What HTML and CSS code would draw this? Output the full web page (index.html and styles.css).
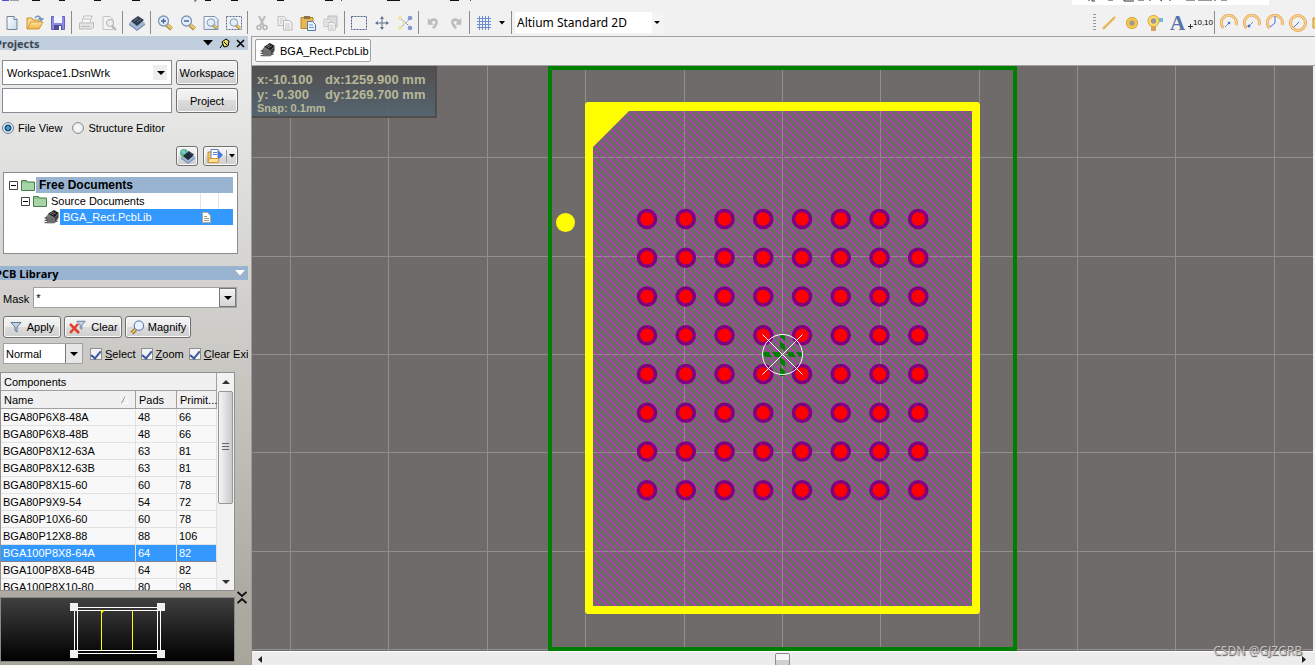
FILE: index.html
```html
<!DOCTYPE html>
<html lang="en">

<head>
    <meta charset="UTF-8">
    <meta name="viewport" content="width=device-width, initial-scale=1.0">
    <title>BGA_Rect.PcbLib</title>
    <link rel="stylesheet" href="styles.css">
</head>

<body>
    <!-- shared icons -->
    <svg class="defs" aria-hidden="true">
        <defs>
            <linearGradient id="paper" x1="0" y1="0" x2="1" y2="1">
                <stop offset="0" stop-color="#fff"/><stop offset="1" stop-color="#c8dcea"/>
            </linearGradient>
            <linearGradient id="gold" x1="0" y1="0" x2="0" y2="1">
                <stop offset="0" stop-color="#ffe9a0"/><stop offset="1" stop-color="#f0b040"/>
            </linearGradient>
            <symbol id="i-lens" viewBox="0 0 16 16">
                <path d="M9.500 9.500l5 4.500" stroke="#9a8040" stroke-width="4"/>
                <path d="M10 9.500l4.500 4" stroke="#f0c860" stroke-width="2.500"/>
                <circle cx="6.500" cy="6" r="5" fill="#e2effa" stroke="#8494b4" stroke-width="1.300"/>
            </symbol>
            <symbol id="i-chip" viewBox="0 0 16 16">
                <path d="M1 8l4-5h7l-2 11H3z" fill="#777"/>
                <path d="M3 8h8v6H3z" fill="#6e6e6e"/>
                <path d="M0 8.500h3M0 11h3M0 13.500h3M12 9.500h2M12 12h2" stroke="#333"/>
                <path d="M4 4l6-4 5 3-4 5z" fill="#1c1c1c"/>
                <path d="M6 4l4-2M8 5l4-2" stroke="#888"/>
                <path d="M11 8l4-5v5l-4 6z" fill="#454545"/>
            </symbol>
            <symbol id="i-board" viewBox="0 0 16 16">
                <path d="M0 8l8 6 8-6v2l-8 6-8-6z" fill="#7b93b8"/>
                <path d="M0 8l8-6 8 6-8 6z" fill="#9fb6d0"/>
                <path d="M2 6l7-5 6 4-7 6z" fill="#303c4c"/>
                <path d="M5 6l4-3M8 7l4-3" stroke="#6d7c90"/>
            </symbol>
            <symbol id="i-folder" viewBox="0 0 14 12">
                <path d="M.5 11.500v-10h5l1 1.500h7v8.500z" fill="#8cc48c" stroke="#4c7c4c"/>
                <path d="M1 4h12v7H1z" fill="#a6d6a6"/>
            </symbol>
            <symbol id="i-funnel" viewBox="0 0 12 12">
                <path d="M1 1.500h10L7 6v5L5 9.500V6z" fill="#c6d4e6" stroke="#5d7492"/>
            </symbol>
            <symbol id="i-copy" viewBox="0 0 16 16">
                <path d="M1 1.500h6l2 2v7H1z" fill="#eee" stroke="#c0c0c0"/>
                <path d="M6.500 5.500h6l2.500 2.500v7H6.500z" fill="#f6f6f6" stroke="#b6b6b6"/>
                <path d="M8 9h5M8 11h5M8 13h5M3 4h3M3 6h2M3 8h2" stroke="#c6c6c6"/>
            </symbol>
            <symbol id="i-undo" viewBox="0 0 16 16">
                <path d="M4 7c3-4 9-4 8 1-.5 2-2 4-4 6" fill="none" stroke="#bcbcbc" stroke-width="3"/>
                <path d="M2 2v8h7z" fill="#bcbcbc"/>
            </symbol>
            <symbol id="i-arc" viewBox="0 0 18 18">
                <path d="M3.500 14A7.500 7.500 0 1 1 16 11" fill="none" stroke="#dca860" stroke-width="3"/>
                <path d="M3.500 14A7.500 7.500 0 1 1 16 11" fill="none" stroke="#ffd08a" stroke-width="1.500"/>
            </symbol>
        </defs>
    </svg>

    <!-- lower edge of the menu row -->
    <div class="menu-edge">
        <svg class="menu-marks" width="480" height="6">
            <path d="M2 0h7v5H2z" fill="#5050e0"/>
            <path d="M10 0h9v5h-9z" fill="#a0a0a0"/>
            <path d="M32 4.500h8M59 4.500h6M94 4.500h7M132 4.500h8M205 4.500h6M231 4.500h7M277 4.500h7M325 4.500h8M387 4.500h13M450 4.500h9" stroke="#111"/>
            <path d="M196 2v3h-2M341.500 0v5M470.500 0v5" fill="none" stroke="#554"/>
        </svg>
        <div class="address-edge">
            <svg width="160" height="6">
                <path d="M4 3h2M8 0v4h3M24 3h5M40 0v4h10M54 3h6M66 2v2M75 2l3 2M86 2v2M102 3h9M114 3h14M131 2v2M137 3h6" fill="none" stroke="#333"/>
            </svg>
        </div>
    </div>

    <div class="toolbar">
        <button class="tool" aria-label="New"><svg width="16" height="16"><path d="M3 1.500h7l3 3v10H3z" fill="url(#paper)" stroke="#6e8498"/><path d="M10 1.500v3h3" fill="#fff" stroke="#6e8498"/></svg></button>
        <button class="tool" aria-label="Open"><svg width="18" height="16"><path d="M1 14V3h5l1 2h6v3" fill="#f8d68a" stroke="#c89030"/><path d="M1 14l4-7h12l-4 7z" fill="url(#gold)" stroke="#d09838"/><path d="M9 3c2-3 5-2 6 1" fill="none" stroke="#7098c0" stroke-width="1.500"/><path d="M12 3h6l-3 4z" fill="#7098c0"/></svg></button>
        <button class="tool" aria-label="Save"><svg width="16" height="16"><path d="M1.500 1.500h13v13h-13z" fill="#8c8cdc" stroke="#6464b8"/><path d="M4 1h8v7H4z" fill="#f2f5ff"/><path d="M4 10h8v5H4z" fill="#4c4c98"/><path d="M9 11h2v4H9z" fill="#fff"/></svg></button>
        <span class="sep"></span>
        <button class="tool" aria-label="Print"><svg width="16" height="16"><path d="M4 7l2-6h8l-2 6" fill="#f8f8f8" stroke="#bbb"/><path d="M1.500 8h12l2-1v5l-2 2h-12z" fill="#e4e4e4" stroke="#bbb"/><path d="M3 11.500h9M6 4h6" stroke="#bbb"/></svg></button>
        <button class="tool" aria-label="Print Preview"><svg width="16" height="16"><path d="M2 1.500h7l3 3v10H2z" fill="#f4f4f4" stroke="#c4c4c4"/><circle cx="9" cy="8" r="3.500" fill="#eee" stroke="#b0b0b0"/><path d="M11 11l4 4" stroke="#b4b4b4" stroke-width="2"/></svg></button>
        <span class="sep"></span>
        <button class="tool" aria-label="Board"><svg width="16" height="16"><use href="#i-board"/></svg></button>
        <span class="sep"></span>
        <button class="tool" aria-label="Zoom In"><svg width="16" height="16"><use href="#i-lens"/><path d="M4 6h5M6.500 3.500v5" stroke="#4464a0" stroke-width="1.500"/></svg></button>
        <button class="tool" aria-label="Zoom Out"><svg width="16" height="16"><use href="#i-lens"/><path d="M4 6h5" stroke="#4464a0" stroke-width="1.500"/></svg></button>
        <button class="tool" aria-label="Fit Document"><svg width="16" height="16"><path d="M1 1.500h11l3 3v10H1z" fill="url(#paper)" stroke="#7c94b0"/><use href="#i-lens" x="3" y="3" width="12" height="12"/></svg></button>
        <button class="tool" aria-label="Zoom Area"><svg width="16" height="16"><path d="M.5 1.500h15v13H.5z" fill="none" stroke="#5a6c94" stroke-dasharray="2 1"/><use href="#i-lens" x="3" y="3" width="12" height="12"/></svg></button>
        <span class="sep"></span>
        <button class="tool" aria-label="Cut"><svg width="16" height="16"><path d="M5 1l5 10M11 1L6 11" stroke="#bcbcbc" stroke-width="2"/><circle cx="5" cy="12.500" r="2" fill="none" stroke="#b4b4b4" stroke-width="1.500"/><circle cx="11" cy="12.500" r="2" fill="none" stroke="#b4b4b4" stroke-width="1.500"/></svg></button>
        <button class="tool" aria-label="Copy"><svg width="16" height="16"><use href="#i-copy"/></svg></button>
        <button class="tool" aria-label="Paste"><svg width="16" height="16"><path d="M1 2.500h12v11H1z" fill="#e8b850" stroke="#b88828"/><path d="M4 1h6v3H4z" fill="#8a7448"/><path d="M7.500 6.500h5l3 3v6h-8z" fill="#e8f2ff" stroke="#5878a8"/><path d="M9 10h4M9 12.500h5" stroke="#7d9cc8"/></svg></button>
        <button class="tool" aria-label="Paste Special"><svg width="16" height="16"><path d="M5 1h9v11H5z" fill="#ddd" stroke="#bcbcbc"/><use href="#i-copy" y="3" width="13" height="13"/></svg></button>
        <span class="sep"></span>
        <button class="tool" aria-label="Select Inside"><svg width="16" height="16"><path d="M.5 1.500h15v13H.5z" fill="none" stroke="#4c5c84" stroke-dasharray="2 1"/></svg></button>
        <button class="tool" aria-label="Move"><svg width="14" height="14" viewBox="1 1 14 14"><path d="M2 8h12M8 2v12" stroke="#62748e"/><path d="M8 1L6 4h4zM8 15l-2-3h4zM1 8l3-2v4zM15 8l-3-2v4z" fill="#62748e"/></svg></button>
        <button class="tool" aria-label="Deselect"><svg width="16" height="16"><path d="M4 4l5 4-5 4M14 2l-5 6 5 5" fill="none" stroke="#7a8cb0" stroke-dasharray="2 1"/><circle cx="3" cy="3" r="2" fill="#f0e6a0"/><circle cx="3" cy="13" r="2" fill="#f0e6a0"/><circle cx="13" cy="3" r="2.300" fill="#7f9acc"/><circle cx="13" cy="13" r="2.300" fill="#7f9acc"/><circle cx="7" cy="8" r="1.500" fill="#f0e6a0"/></svg></button>
        <span class="sep"></span>
        <button class="tool" aria-label="Undo"><svg width="14" height="14"><use href="#i-undo"/></svg></button>
        <button class="tool" aria-label="Redo"><svg width="14" height="14"><use href="#i-undo" transform="translate(14 0) scale(-1 1)"/></svg></button>
        <span class="sep"></span>
        <button class="tool" aria-label="Grid"><svg width="16" height="16"><path d="M1 3.500h14M1 6.500h14M1 9.500h14M1 12.500h14M3.500 1v14M6.500 1v14M9.500 1v14M12.500 1v14" stroke="#6a8fcc"/></svg></button>
        <button class="tool tool-caret" aria-label="Grid options"><svg width="6" height="4"><path d="M0 0h6L3 3.500z"/></svg></button>
        <span class="sep"></span>
        <div class="pick view-pick">
            <select aria-label="View configuration"><option>Altium Standard 2D</option></select>
        </div>

        <div class="tools-right">
            <span class="grip"></span>
            <button class="tool" aria-label="Place Line"><svg width="16" height="16"><path d="M2 14L14 2" stroke="#dca030" stroke-width="2"/><path d="M2 14L14 2" stroke="#ffd468" stroke-width=".8"/></svg></button>
            <button class="tool" aria-label="Place Pad"><svg width="16" height="16"><circle cx="8" cy="8" r="4" fill="#aaa" stroke="#c08c28" stroke-width="4"/><circle cx="8" cy="8" r="4" fill="#999" stroke="#f4c44c" stroke-width="3"/></svg></button>
            <button class="tool" aria-label="Place Via"><svg width="16" height="16"><path d="M4 8h5v8H4z" fill="#dda060"/><path d="M9 3h7v4H9z" fill="#6cbcd8"/><circle cx="6.500" cy="6" r="4" fill="#aaa" stroke="#d09c30" stroke-width="4"/><circle cx="6.500" cy="6" r="4" fill="#999" stroke="#ffda68" stroke-width="2.500"/></svg></button>
            <button class="tool tool-text" aria-label="Place String">A</button>
            <button class="tool tool-coord" aria-label="Place Coordinate"><svg width="5" height="5"><path d="M0 2.500h5M2.500 0v5" stroke="#333"/></svg><span>10,10</span></button>
            <span class="sep"></span>
            <button class="tool" aria-label="Arc Center"><svg width="18" height="18"><use href="#i-arc"/><path d="M5 13l4-4" stroke="#6b90cc"/><circle cx="9" cy="9" r="1.300" fill="#4874c4"/></svg></button>
            <button class="tool" aria-label="Arc Edge"><svg width="18" height="18"><use href="#i-arc"/><path d="M5 13l5-5" stroke="#6b90cc"/><circle cx="6" cy="12" r="1.500" fill="#4874c4"/></svg></button>
            <button class="tool" aria-label="Arc Any Angle"><svg width="18" height="18"><use href="#i-arc"/><path d="M4 13l5-4V2" fill="none" stroke="#4874c4"/></svg></button>
            <button class="tool" aria-label="Full Circle"><svg width="18" height="18"><circle cx="9" cy="9" r="7.500" fill="none" stroke="#dca860" stroke-width="3"/><circle cx="9" cy="9" r="7.500" fill="none" stroke="#ffd08a" stroke-width="1.500"/><path d="M5 13l5-5" stroke="#4874c4"/></svg></button>
            <button class="tool tool-cut" aria-label="Place Fill"><svg width="16" height="12"><path d="M4 1h12v10H4z" fill="#ffd058" stroke="#cc9030"/></svg></button>
        </div>
    </div>

    <div class="main">
        <div class="sidebar">
            <div class="panel-title">
                <span class="panel-name">Projects</span>
                <button class="plain" aria-label="Panel menu"><svg width="10" height="6"><path d="M0 0h10L5 5.500z"/></svg></button>
                <button class="plain" aria-label="Pin"><svg width="11" height="11"><path d="M1 10l3-4" stroke="#000"/><path d="M3 4l4-3 3 2-1 5-4 1z" fill="#e8e060" stroke="#000"/><path d="M5 4l3 3" stroke="#000"/></svg></button>
                <button class="plain" aria-label="Close"><svg width="9" height="9"><path d="M1 1l7 7M8 1L1 8" stroke="#000" stroke-width="1.600"/></svg></button>
            </div>

            <div class="projects">
                <div class="field-row">
                    <div class="pick workspace-pick">
                        <select aria-label="Workspace file"><option>Workspace1.DsnWrk</option></select>
                    </div>
                    <button class="btn btn-wide">Workspace</button>
                </div>
                <div class="field-row">
                    <input class="text-box" type="text" aria-label="Project name">
                    <button class="btn btn-wide">Project</button>
                </div>
                <div class="radio-row">
                    <label><input type="radio" name="view" checked>File View</label>
                    <label><input type="radio" name="view">Structure Editor</label>
                </div>
                <div class="icon-row">
                    <button class="btn btn-icon" aria-label="Project options"><svg width="16" height="16"><use href="#i-board" x="2" y="2" width="14" height="14"/><circle cx="5" cy="5" r="4" fill="#5cb87c"/><path d="M2 3l3-1 2 3-3 1z" fill="#7cc4f0"/><path d="M4 8l5-4 5 4-5 4z" fill="#202c3c"/></svg></button>
                    <button class="btn btn-split" aria-label="Open project">
                        <svg width="16" height="16"><path d="M1 14V4h4l1 2h5v8z" fill="#f8cc60" stroke="#c89030"/><path d="M4 1.500h7v9H4z" fill="#fff" stroke="#5a80c8"/><path d="M6 4.500h4M6 6.500h4" stroke="#5a80c8"/><path d="M11 2l5 5-5 5z" fill="#4878e0"/><path d="M1 14.500l1-4h10l-1 4z" fill="#ffe090" stroke="#d09838"/></svg>
                        <svg width="9" height="12"><path d="M.5 0v12" stroke="#999"/><path d="M3 4h6L6 7.500z"/></svg>
                    </button>
                </div>
                <div class="tree">
                    <div class="node node-root">
                        <svg width="9" height="9"><path d="M.5.5h8v8h-8z" fill="#fff" stroke="#444"/><path d="M2 4.500h5" stroke="#000"/></svg>
                        <svg width="14" height="12"><use href="#i-folder"/></svg>
                        <span class="node-name">Free Documents</span>
                    </div>
                    <div class="node node-sub">
                        <svg width="9" height="9"><path d="M.5.5h8v8h-8z" fill="#fff" stroke="#444"/><path d="M2 4.500h5" stroke="#000"/></svg>
                        <svg width="14" height="12"><use href="#i-folder"/></svg>
                        <span class="node-name">Source Documents</span>
                        <span class="node-cell"></span>
                        <span class="node-cell"></span>
                    </div>
                    <div class="node node-file">
                        <svg width="16" height="15"><use href="#i-chip"/></svg>
                        <span class="node-name">BGA_Rect.PcbLib</span>
                        <span class="node-doc"><svg width="9" height="11"><path d="M.5.5h5l3 3v7h-8z" fill="#fff" stroke="#b0a890"/><path d="M2 4.500h3M2 6.500h5M2 8.500h5" stroke="#a09880"/></svg></span>
                    </div>
                </div>
            </div>

            <div class="panel-title panel-title-active">
                <span class="panel-name">PCB Library</span>
                <button class="plain" aria-label="Panel menu"><svg width="10" height="6"><path d="M0 0h10L5 5.500z" fill="#fff"/></svg></button>
            </div>

            <div class="library">
                <div class="mask-row">
                    <label for="mask">Mask</label>
                    <div class="combo">
                        <input id="mask" type="text" value="*">
                        <button class="combo-btn" aria-label="Mask history"><svg width="8" height="4"><path d="M0 0h8L4 4z"/></svg></button>
                    </div>
                </div>
                <div class="button-row">
                    <button class="btn btn-apply"><svg width="12" height="12"><use href="#i-funnel"/></svg>Apply</button>
                    <button class="btn btn-clear"><svg width="18" height="14"><path d="M2 4l9 9M10 4l-8 9" stroke="#e04030" stroke-width="2.500"/><use href="#i-funnel" x="8" y="0" width="10" height="10"/></svg>Clear</button>
                    <button class="btn btn-magnify"><svg width="15" height="15" viewBox="0 0 16 16"><path d="M6 10l-4 4" stroke="#8c6c28" stroke-width="4"/><path d="M6 10l-4 4" stroke="#f0c050" stroke-width="2"/><circle cx="9.500" cy="6" r="5" fill="#e6f2ff" stroke="#6c84b0" stroke-width="1.300"/></svg>Magnify</button>
                </div>
                <div class="check-row">
                    <div class="pick mode-pick">
                        <select aria-label="Highlight mode"><option>Normal</option></select>
                    </div>
                    <label><input type="checkbox" checked><span><u>S</u>elect</span></label>
                    <label><input type="checkbox" checked><span><u>Z</u>oom</span></label>
                    <label><input type="checkbox" checked><span><u>C</u>lear Existing</span></label>
                </div>
            </div>

            <div class="components">
                <div class="grid-wrap">
                    <div class="grid-caption">Components</div>
                    <table class="grid">
                        <thead>
                            <tr>
                                <th class="col-name"><span class="sort-head">Name<svg width="8" height="8"><path d="M4 .5l3.500 7h-7" fill="none" stroke="#fff"/><path d="M.5 7.500L4 .5" stroke="#999"/></svg></span></th>
                                <th class="col-pads">Pads</th>
                                <th>Primit...</th>
                            </tr>
                        </thead>
                        <tbody>
                            <tr><td>BGA80P6X8-48A</td><td>48</td><td>66</td></tr>
                            <tr><td>BGA80P6X8-48B</td><td>48</td><td>66</td></tr>
                            <tr><td>BGA80P8X12-63A</td><td>63</td><td>81</td></tr>
                            <tr><td>BGA80P8X12-63B</td><td>63</td><td>81</td></tr>
                            <tr><td>BGA80P8X15-60</td><td>60</td><td>78</td></tr>
                            <tr><td>BGA80P9X9-54</td><td>54</td><td>72</td></tr>
                            <tr><td>BGA80P10X6-60</td><td>60</td><td>78</td></tr>
                            <tr><td>BGA80P12X8-88</td><td>88</td><td>106</td></tr>
                            <tr class="selected"><td>BGA100P8X8-64A</td><td>64</td><td>82</td></tr>
                            <tr><td>BGA100P8X8-64B</td><td>64</td><td>82</td></tr>
                            <tr><td>BGA100P8X10-80</td><td>80</td><td>98</td></tr>
                        </tbody>
                    </table>
                </div>
                <div class="v-scroll">
                    <svg width="8" height="4"><path d="M0 4h8L4 0z" fill="#333"/></svg>
                    <div class="v-thumb"><svg width="7" height="9"><path d="M0 .5h7M0 3.500h7M0 6.500h7" stroke="#666"/></svg></div>
                    <svg width="8" height="4"><path d="M0 0h8L4 4z" fill="#333"/></svg>
                </div>
            </div>

            <div class="preview-row">
                <div class="preview">
                    <svg width="97" height="56">
                        <path d="M5.500 5.500h86v46h-86zM8.500 8.500h80v40h-80z" fill="none" stroke="#fff"/>
                        <path d="M32.500 9v40M63.500 9v40" stroke="#ff0"/>
                        <path d="M32 8h4l-4 4z" fill="#ff0"/>
                        <path d="M1 1h8v8H1zM88 1h8v8h-8zM1 48h8v8H1zM88 48h8v8h-8z" fill="#f0f0f0"/>
                    </svg>
                </div>
                <button class="plain collapse" aria-label="Collapse preview"><svg width="10" height="13"><path d="M.5 1L5 5l4.500-4M.5 12L5 8l4.500 4" fill="none" stroke="#111" stroke-width="1.800"/></svg></button>
            </div>
        </div>

        <div class="editor">
            <div class="tabs">
                <button class="tab"><svg width="16" height="15"><use href="#i-chip"/></svg>BGA_Rect.PcbLib</button>
            </div>

            <div class="canvas">
                <svg class="board" viewBox="0 0 1061 585" preserveAspectRatio="xMidYMid slice">
                    <defs>
                        <pattern id="hatch" width="8" height="8" patternUnits="userSpaceOnUse">
                            <path d="M0 0h1v1h1v1h1v1h1v1h1v1h1v1h1v1h1v1h-1v-1h-1v-1h-1v-1h-1v-1h-1v-1h-1v-1h-1v-1h-1z" fill="#f0f"/>
                        </pattern>
                        <g id="pad">
                            <circle r="10.300" fill="#800080"/>
                            <circle r="6.700" fill="#f00"/>
                        </g>
                        <g id="pad-row">
                            <use href="#pad"/>
                            <use href="#pad" x="38.750"/>
                            <use href="#pad" x="77.500"/>
                            <use href="#pad" x="116.250"/>
                            <use href="#pad" x="155"/>
                            <use href="#pad" x="193.750"/>
                            <use href="#pad" x="232.500"/>
                            <use href="#pad" x="271.250"/>
                        </g>
                    </defs>
                    <!-- snap grid -->
                    <path d="M38.500 0v585M136.500 0v585M235.500 0v585M333.500 0v585M432.500 0v585M530.500 0v585M628.500 0v585M727.500 0v585M825.500 0v585M923.500 0v585M1022.500 0v585M0 91.500h1061M0 190.500h1061M0 288.500h1061M0 386.500h1061M0 485.500h1061M0 583.500h1061" stroke="#918e8e"/>
                    <!-- courtyard, body and silkscreen -->
                    <path d="M298 2h465v581H298z" fill="none" stroke="#008000" stroke-width="4"/>
                    <path d="M377 45h343v495H341V81z" fill="url(#hatch)" shape-rendering="crispEdges"/>
                    <path fill-rule="evenodd" d="M335 36h391l2 2v508l-2 2H335l-2-2V38zM377 45l-36 36v459h379V45z" fill="#ff0"/>
                    <circle cx="313.500" cy="156.500" r="9.500" fill="#ff0"/>
                    <use href="#pad-row" x="395" y="153"/>
                    <use href="#pad-row" x="395" y="191.750"/>
                    <use href="#pad-row" x="395" y="230.500"/>
                    <use href="#pad-row" x="395" y="269.250"/>
                    <use href="#pad-row" x="395" y="308"/>
                    <use href="#pad-row" x="395" y="346.750"/>
                    <use href="#pad-row" x="395" y="385.500"/>
                    <use href="#pad-row" x="395" y="424.250"/>
                    <!-- origin marker -->
                    <path d="M510 286h7l3 5h-7zM520 286h7l3 5h-7zM535 286h6l3 5h-7zM544 286h6v5h-3zM528 269h5v6l-5-4zM528 275l5 4v6l-5-4zM528 291l5 4v6l-5-4zM528 301l5 4v5h-5z" fill="#008000"/>
                    <circle cx="530.500" cy="288.500" r="20" fill="none" stroke="#fff"/>
                    <path d="M510.500 268.500l40 40M550.500 268.500l-40 40" stroke="#fff"/>
                </svg>
                <div class="readout">
                    <div class="readout-grid">
                        <span>x:-10.100</span><span>dx:1259.900 mm</span>
                        <span>y: -0.300</span><span>dy:1269.700 mm</span>
                    </div>
                    <div class="readout-snap">Snap: 0.1mm</div>
                </div>
            </div>

            <div class="h-scroll">
                <svg width="4" height="7"><path d="M4 0v7L0 3.500z" fill="#222"/></svg>
                <div class="h-thumb"></div>
                <svg width="4" height="7"><path d="M0 0v7l4-3.500z" fill="#222"/></svg>
            </div>
            <div class="watermark">CSDN @GJZGRB</div>
        </div>
    </div>
</body>

</html>
```

FILE: styles.css
```css
* {
    box-sizing: border-box;
}

body {
    margin: 0;
    height: 100vh;
    display: flex;
    flex-direction: column;
    overflow: hidden;
    background: #f0f0f0;
    font-family: "Liberation Sans", Arial, sans-serif;
    font-size: 11px;
    line-height: 16px;
    color: #000;
}

button,
input,
select {
    font: inherit;
    color: inherit;
    margin: 0;
}

svg {
    display: block;
    flex: none;
}

.defs {
    position: absolute;
    width: 0;
    height: 0;
}

/* menu row */
.menu-edge {
    display: flex;
    align-items: flex-end;
    justify-content: space-between;
    height: 5px;
    overflow: hidden;
    flex: none;
}

.menu-marks {
    margin-bottom: 3px;
}

.address-edge {
    width: 197px;
    height: 6px;
    margin-right: 46px;
    padding-left: 12px;
    background: #fff;
}

.address-edge svg {
    margin-top: -2px;
}

/* toolbar */
.toolbar {
    display: flex;
    align-items: center;
    height: 31px;
    padding-top: 4px;
    background: #f1f1f1;
    flex: none;
}

.tool {
    display: flex;
    align-items: center;
    justify-content: center;
    width: 23px;
    height: 24px;
    padding: 0;
    border: none;
    background: none;
    flex: none;
}

.tool-caret {
    width: 14px;
}

.tool-text {
    font-family: "Liberation Serif", serif;
    font-size: 21px;
    font-weight: bold;
    color: #5672a8;
}

.tool-coord {
    align-items: flex-end;
    font-family: "Liberation Sans", Arial, sans-serif;
    font-size: 8px;
    line-height: 16px;
}

.tool-coord svg {
    margin-bottom: 6px;
}

.tool-coord span {
    margin-bottom: 4px;
}

.tool-cut {
    width: 6px;
    justify-content: flex-start;
    overflow: hidden;
}

.sep {
    width: 1px;
    height: 23px;
    margin: 0 2px;
    background: #8c8c8c;
    flex: none;
}

.grip {
    width: 3px;
    height: 17px;
    margin: 0 1px;
    background: repeating-linear-gradient(#999 0 1px, #f1f1f1 1px 3px);
}

.tools-right {
    display: flex;
    align-items: center;
    margin-left: auto;
}

/* drop-downs */
.pick {
    position: relative;
    background: #fff;
}

.pick select {
    display: block;
    width: 100%;
    height: 100%;
    padding: 0 4px;
    border: none;
    background: none;
    appearance: none;
}

.pick::after {
    content: "";
    position: absolute;
    top: 50%;
    right: 6px;
    margin-top: -2px;
    border: 4px solid transparent;
    border-top-color: #000;
    border-bottom: none;
    pointer-events: none;
}

.view-pick {
    width: 149px;
    height: 21px;
    margin-left: 1px;
    font-family: "Noto Sans", sans-serif;
    font-size: 12px;
}

.view-pick select {
    padding: 0 2px;
    background: linear-gradient(to left, #f4f4f4 12px, #fff 12px);
}

.view-pick::after {
    right: 4px;
    border-width: 3px;
    border-bottom: none;
}

/* layout */
.main {
    display: flex;
    flex: 1;
    min-height: 0;
}

.sidebar {
    display: flex;
    flex-direction: column;
    width: 252px;
    padding-right: 3px;
    border-right: 1px solid #9c9c9c;
    overflow: hidden;
    background: linear-gradient(#f0f0f0, #dddddb 25%, #c8c6c1 55%, #aeaba2 88%, #a8a59b);
    flex: none;
}

.panel-title {
    display: flex;
    align-items: center;
    gap: 6px;
    height: 14px;
    padding-right: 3px;
    background: #c0cddc;
    font-family: "Open Sans", sans-serif;
    font-weight: bold;
    color: #3c4650;
    flex: none;
}

.panel-title-active {
    background: #99b4d1;
    color: #000;
}

.panel-name {
    flex: 1;
    margin-left: -5px;
    padding-top: 1px;
}

.plain {
    padding: 0;
    border: none;
    background: none;
}

.projects {
    padding: 10px 10px 0 2px;
    flex: none;
}

.field-row {
    display: flex;
    gap: 4px;
    height: 25px;
    margin-bottom: 3px;
}

.workspace-pick,
.text-box {
    flex: 1;
    min-width: 0;
    border: 1px solid #898c95;
    background: #fff;
}

.workspace-pick select {
    background: linear-gradient(#eee, #eee) right 4px center / 14px 15px no-repeat;
}

.btn {
    display: flex;
    align-items: center;
    justify-content: center;
    gap: 5px;
    padding: 0;
    border: 1px solid #707070;
    border-radius: 3px;
    background: linear-gradient(#f4f4f4, #ebebeb 48%, #dcdcdc 50%, #cfcfcf);
    box-shadow: inset 0 0 0 1px #fafafa;
}

.btn-wide {
    width: 62px;
}

.radio-row {
    display: flex;
    gap: 10px;
    margin-top: 7px;
}

.radio-row label,
.check-row label {
    display: flex;
    align-items: center;
    white-space: nowrap;
}

.radio-row label {
    gap: 4px;
}

.radio-row input {
    appearance: none;
    width: 12px;
    height: 12px;
    border: 1px solid #8e8f8f;
    border-radius: 50%;
    background: radial-gradient(#fff, #ddd);
}

.radio-row input:checked {
    border-color: #6c7c8c;
    background: radial-gradient(circle at 50% 50%, #60c8f0 0, #124a7c 3px, #124a7c 3px, #e8f0f6 4px);
}

.icon-row {
    display: flex;
    justify-content: flex-end;
    gap: 5px;
    height: 20px;
    margin-top: 10px;
}

.btn-icon {
    width: 22px;
}

.btn-split {
    width: 35px;
    gap: 3px;
}

/* project tree */
.tree {
    height: 82px;
    margin: 6px 0 0 1px;
    padding: 4px;
    border: 1px solid #8c8c8c;
    background: #fff;
}

.node {
    display: flex;
    align-items: center;
    gap: 3px;
    height: 16px;
}

.node-name {
    flex: 1;
    padding-left: 3px;
}

.node-root {
    padding-left: 1px;
    font-size: 12px;
    font-weight: bold;
}

.node-root .node-name {
    margin-left: -2px;
    background: #99b4d1;
}

.node-sub {
    padding-left: 13px;
    gap: 3px;
}

.node-sub .node-name {
    padding-left: 1px;
}

.node-cell {
    width: 15px;
    height: 16px;
    border-left: 1px solid #e4e4e4;
}

.node-file {
    gap: 0;
    padding-left: 36px;
}

.node-file .node-name,
.node-doc {
    background: #3399ff;
    color: #fff;
}

.node-doc {
    display: flex;
    align-items: center;
    width: 31px;
    height: 16px;
}

/* library panel */
.sidebar .panel-title-active {
    margin-top: 12px;
}

.library {
    padding-left: 3px;
    overflow: hidden;
    flex: none;
}

.mask-row {
    display: flex;
    align-items: center;
    gap: 4px;
    height: 21px;
    margin: 7px 11px 0 0;
}

.mask-row label {
    padding-top: 2px;
}

.combo {
    display: flex;
    flex: 1;
    height: 21px;
    border: 1px solid #a0a0a0;
    background: #fff;
}

.combo input {
    flex: 1;
    min-width: 0;
    padding: 0 2px;
    border: none;
    background: none;
}

.combo-btn {
    display: flex;
    align-items: center;
    justify-content: center;
    width: 17px;
    padding: 0;
    border: 1px solid #777;
    background: linear-gradient(#f4f4f4, #d4d4d4);
}

.button-row {
    display: flex;
    gap: 3px;
    height: 22px;
    margin-top: 8px;
}

.btn-apply {
    width: 58px;
}

.btn-clear {
    width: 58px;
}

.btn-magnify {
    width: 66px;
    gap: 3px;
}

.check-row {
    display: flex;
    align-items: center;
    gap: 5px;
    height: 21px;
    margin-top: 5px;
}

.mode-pick {
    width: 80px;
    height: 21px;
    margin-right: 2px;
    border: 1px solid #a0a0a0;
    flex: none;
}

.mode-pick::after {
    right: 4px;
}

.mode-pick select {
    padding: 0 2px;
    background: linear-gradient(to left, #e6e6e6 16px, #777 16px, #777 17px, #fff 17px);
}

.check-row label {
    gap: 3px;
}

.check-row input {
    appearance: none;
    display: flex;
    justify-content: center;
    width: 12px;
    height: 12px;
    border: 1px solid #8e8f8f;
    background: #f2f4f8;
    flex: none;
}

.check-row input:checked::after {
    content: "";
    width: 4px;
    height: 8px;
    border: solid #3c58a0;
    border-width: 0 2px 2px 0;
    transform: rotate(40deg);
}

/* components grid */
.components {
    display: flex;
    flex: 1;
    min-height: 0;
    width: 235px;
    margin-top: 8px;
    border: 1px solid #909090;
    background: #f0f0f0;
}

.grid-wrap {
    flex: 1;
    overflow: hidden;
}

.grid-caption {
    height: 18px;
    padding: 1px 3px;
    border-bottom: 1px solid #a0a0a0;
    border-right: 1px solid #a0a0a0;
}

.grid {
    width: 100%;
    border-collapse: separate;
    border-spacing: 0;
    table-layout: fixed;
}

.grid th {
    height: 18px;
    padding: 0 3px;
    border-bottom: 1px solid #a0a0a0;
    border-right: 1px solid #a0a0a0;
    font-weight: normal;
    text-align: left;
    white-space: nowrap;
}

.grid .col-name {
    width: 135px;
}

.grid .col-pads {
    width: 41px;
}

.sort-head {
    display: flex;
    align-items: center;
    justify-content: space-between;
    padding-right: 3px;
}

.grid td {
    height: 17px;
    padding: 0 2px;
    border-bottom: 1px solid #e2e2e2;
    border-right: 1px solid #e2e2e2;
    background: #f8f8f8;
    line-height: 16px;
}

.grid .selected td {
    border-bottom: 1px dotted #d06820;
    background: #3399ff;
    color: #fff;
}

.v-scroll {
    display: flex;
    flex-direction: column;
    align-items: center;
    width: 17px;
    padding: 7px 0 6px;
    background: #f2f2f2;
}

.v-thumb {
    display: flex;
    align-items: center;
    justify-content: center;
    width: 15px;
    height: 113px;
    margin: 7px 0 auto;
    border: 1px solid #979797;
    border-radius: 2px;
    background: linear-gradient(to right, #f4f4f4, #e0e0e2 50%, #c8c8cc);
}

.preview-row {
    display: flex;
    align-items: flex-start;
    padding: 6px 0 3px;
    flex: none;
}

.preview {
    display: flex;
    justify-content: center;
    width: 235px;
    height: 65px;
    padding-top: 4px;
    border: 1px solid #888;
    background: linear-gradient(#404040, #000);
}

.collapse {
    margin: -6px 0 0 2px;
}

/* editor */
.editor {
    position: relative;
    display: flex;
    flex-direction: column;
    flex: 1;
    min-width: 0;
    border-top: 1px solid #a0a0a0;
}

.tabs {
    height: 29px;
    padding: 2px 3px;
    border-bottom: 1px solid #a0a0a0;
    flex: none;
}

.tab {
    display: flex;
    align-items: center;
    gap: 4px;
    height: 23px;
    padding: 0 1px 0 4px;
    border: 1px solid #a0a0a0;
    border-radius: 2px;
    background: #fff;
}

.canvas {
    position: relative;
    flex: 1;
    min-height: 0;
    margin-right: 2px;
    overflow: hidden;
    background: #6f6b6a;
}

.board {
    width: 100%;
    height: 100%;
}

/* cursor position */
.readout {
    position: absolute;
    top: 0;
    left: 0;
    width: 185px;
    height: 52px;
    padding: 6px 5px;
    border: solid #504d4d;
    border-width: 0 2px 2px 0;
    background: linear-gradient(rgba(78, 75, 75, .9), rgba(82, 100, 112, .9));
    font-weight: bold;
    color: #b8b898;
}

.readout-grid {
    display: grid;
    grid-template-columns: 68px 1fr;
    font-size: 13px;
    line-height: 15px;
    white-space: nowrap;
}

.readout-snap {
    line-height: 13px;
}

.h-scroll {
    display: flex;
    align-items: center;
    justify-content: space-between;
    height: 14px;
    padding: 2px 9px 0 6px;
    background: #ececec;
    border-top: 1px solid #fff;
    flex: none;
}

.h-thumb {
    width: 15px;
    height: 13px;
    border: 1px solid #8c8c8c;
    border-radius: 2px;
    background: linear-gradient(#f6f6f6 50%, #d0d0d4 50%);
}

.watermark {
    position: absolute;
    right: 13px;
    bottom: 6px;
    font-family: "Noto Sans", sans-serif;
    font-size: 12px;
    color: #c4c4c4;
    text-shadow: 1px 1px 1px #555;
}
```
